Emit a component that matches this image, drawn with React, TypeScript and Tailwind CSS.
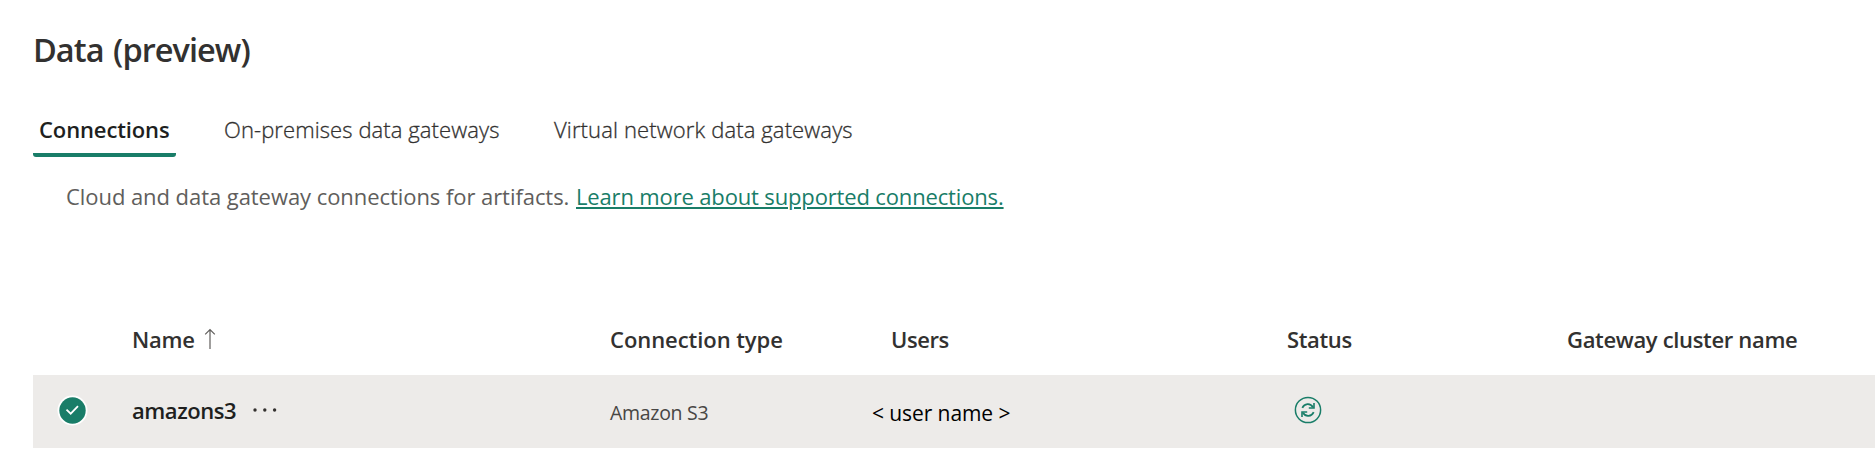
function SortUpIcon() {
  return (
    <svg width="12" height="22" viewBox="0 0 12 22" fill="none" stroke="#605e5c" strokeWidth="1.2">
      <path d="M6 21V1.8M1.2 6.4L6 1.6l4.8 4.8" />
    </svg>
  );
}

function CheckedIcon() {
  return (
    <svg width="31" height="31" viewBox="0 0 31 31" fill="none">
      <circle cx="15.5" cy="15.5" r="15" fill="#fff" />
      <circle cx="15.5" cy="15.5" r="13.2" fill="#197d68" />
      <path d="M9.5 14.6l4.2 4.1 7.3-7.5" stroke="#fff" strokeWidth="1.8" />
    </svg>
  );
}

function MoreIcon() {
  return (
    <svg width="26" height="6" viewBox="0 0 26 6" fill="#33302e">
      <circle cx="3" cy="3" r="1.7" />
      <circle cx="12.8" cy="3" r="1.7" />
      <circle cx="22.6" cy="3" r="1.7" />
    </svg>
  );
}

function StatusIcon() {
  return (
    <svg width="28" height="28" viewBox="0 0 28 28" fill="none" stroke="#197d68">
      <circle cx="14" cy="14" r="12.6" strokeWidth="1.5" />
      <path d="M8.3 11.9C10.4 7.3 16.3 6.6 19 11.2" strokeWidth="1.7" />
      <path d="M20 7v5h-5.2" strokeWidth="1.6" />
      <path d="M19.7 16.1C17.6 20.7 11.7 21.4 9 16.8" strokeWidth="1.7" />
      <path d="M8 21v-5h5.2" strokeWidth="1.6" />
    </svg>
  );
}

export default function App() {
  return (
    <main className="h-[450px] w-full overflow-hidden bg-white pl-[33px] font-['Open_Sans','Noto_Sans',sans-serif] text-[22px] leading-[30px] text-[#323130]">
      <h1 className="pt-[30px] text-[32.5px] leading-[40px] font-semibold tracking-[-0.95px] whitespace-nowrap [word-spacing:2px]">
        Data (preview)
      </h1>

      <nav className="mt-[36px] flex h-[51px] whitespace-nowrap">
        <a className="flex w-[143px] items-center rounded-b-[3px] border-b-4 border-[#197d68] pb-[2px] pl-[6px] font-semibold tracking-[-0.12px] text-[#201f1e]">
          Connections
        </a>
        <a className="ml-[48px] flex w-[330px] items-center border-b-4 border-transparent pb-[2px] font-light tracking-[0.09px] text-[#323130] [-webkit-text-stroke:0.3px_#323130]">
          On-premises data gateways
        </a>
        <a className="flex items-center border-b-4 border-transparent pb-[2px] font-light tracking-[0.13px] text-[#323130] [-webkit-text-stroke:0.3px_#323130]">
          Virtual network data gateways
        </a>
      </nav>

      <p className="mt-[24px] flex pl-[33px] whitespace-nowrap text-[#605e5c]">
        <span className="w-[510px] tracking-[-0.06px]">Cloud and data gateway connections for artifacts.</span>
        <a className="tracking-[-0.15px] text-[#197d68] underline decoration-2 underline-offset-[2px]">
          Learn more about supported connections.
        </a>
      </p>

      <section className="mt-[94px] whitespace-nowrap">
        <header className="flex h-[70px] items-center pb-[2px] font-semibold">
          <div className="flex w-[577px] items-center gap-[9px] pl-[99px]">
            <span className="tracking-[-0.25px]">Name</span>
            <SortUpIcon />
          </div>
          <div className="w-[281px] tracking-[-0.06px]">Connection type</div>
          <div className="w-[396px] tracking-[-0.4px]">Users</div>
          <div className="w-[280px] tracking-[-0.35px]">Status</div>
          <div className="tracking-[-0.33px]">Gateway cluster name</div>
        </header>
        <div className="flex h-[73px] items-center bg-[#edebe9]">
          <div className="flex w-[99px] pb-[3px] pl-[24px]">
            <CheckedIcon />
          </div>
          <div className="flex w-[478px] items-center gap-[15px] pb-[4px]">
            <span className="w-[105px] font-semibold tracking-[-0.45px] text-[#201f1e]">amazons3</span>
            <MoreIcon />
          </div>
          <div className="w-[262px] pt-[3px] text-[19.5px] tracking-[-0.3px] text-[#484644]">Amazon S3</div>
          <div className="w-[422px] pt-[2px] text-[21px] tracking-[-0.08px] text-black">&lt; user name &gt;</div>
          <div className="pb-[4px]">
            <StatusIcon />
          </div>
        </div>
      </section>
    </main>
  );
}
